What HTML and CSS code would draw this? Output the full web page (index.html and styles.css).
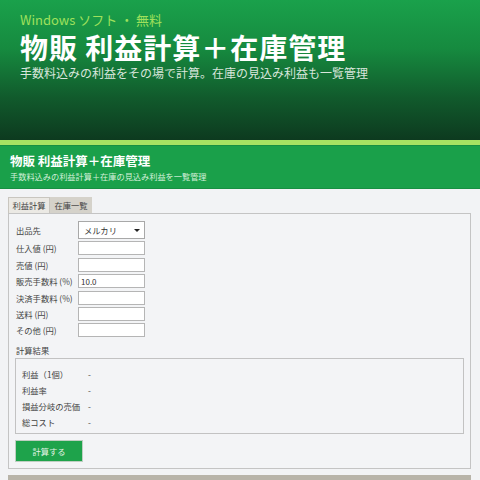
FILE: index.html
```html
<!DOCTYPE html>
<html lang="ja">
<head>
<meta charset="utf-8">
<title>物販 利益計算＋在庫管理</title>
<link rel="stylesheet" href="styles.css">
</head>
<body>
<section class="hero">
  <div class="eyebrow">Windows ソフト ・ 無料</div>
  <h1 class="hero-title">物販 利益計算＋在庫管理</h1>
  <p class="hero-sub">手数料込みの利益をその場で計算。在庫の見込み利益も一覧管理</p>
</section>
<div class="stripe"></div>
<header class="app-header">
  <div class="app-title">物販 利益計算＋在庫管理</div>
  <div class="app-sub">手数料込みの利益計算＋在庫の見込み利益を一覧管理</div>
</header>
<main class="main">
  <div class="tabs">
    <div class="tab active">利益計算</div>
    <div class="tab">在庫一覧</div>
  </div>
  <div class="panel">
    <div class="form">
      <div class="row"><span class="label">出品先</span><div class="select"><span>メルカリ</span><span class="arrow"></span></div></div>
      <div class="row"><span class="label">仕入値 (円)</span><input class="field" type="text"></div>
      <div class="row"><span class="label">売値 (円)</span><input class="field" type="text"></div>
      <div class="row"><span class="label">販売手数料 (%)</span><input class="field" type="text" value="10.0"></div>
      <div class="row"><span class="label">決済手数料 (%)</span><input class="field" type="text"></div>
      <div class="row"><span class="label">送料 (円)</span><input class="field" type="text"></div>
      <div class="row"><span class="label">その他 (円)</span><input class="field" type="text"></div>
    </div>
    <div class="group-label">計算結果</div>
    <div class="results">
      <div class="res-row"><span class="res-label">利益（1個）</span><span class="res-val">-</span></div>
      <div class="res-row"><span class="res-label">利益率</span><span class="res-val">-</span></div>
      <div class="res-row"><span class="res-label">損益分岐の売価</span><span class="res-val">-</span></div>
      <div class="res-row"><span class="res-label">総コスト</span><span class="res-val">-</span></div>
    </div>
    <button class="btn" type="button">計算する</button>
  </div>
  <div class="bottom-bar"></div>
</main>
</body>
</html>
```
FILE: styles.css
```css
* { box-sizing: border-box; }
html, body { margin: 0; padding: 0; }
body {
  width: 480px;
  height: 480px;
  overflow: hidden;
  background: #f2f3f5;
  font-family: "Noto Sans CJK JP", "Noto Sans", sans-serif;
  color: #444;
}
.hero {
  height: 140px;
  padding: 12px 20px 0;
  background: linear-gradient(to bottom, #1aa14b 0%, #168a3f 35%, #115a2c 70%, #0d3a1f 100%);
}
.eyebrow {
  font-size: 13px;
  line-height: 16px;
  color: #9fe05c;
}
.hero-title {
  margin: 3px 0 0;
  font-size: 28px;
  line-height: 32px;
  font-weight: 700;
  letter-spacing: 1px;
  color: #fff;
}
.hero-sub {
  margin: 3px 0 0;
  font-size: 12px;
  line-height: 14px;
  color: #d9e6dc;
}
.stripe {
  height: 5px;
  background: #a6e262;
}
.app-header {
  height: 44px;
  padding: 7px 10px 0;
  background: #1aa04a;
  border-top: 1px solid #178f42;
  border-bottom: 1px solid #178f42;
}
.app-title {
  font-size: 12.5px;
  line-height: 16px;
  font-weight: 700;
  color: #fff;
}
.app-sub {
  margin-top: 2px;
  font-size: 8.2px;
  line-height: 11px;
  color: #d4f0da;
}
.main {
  padding: 8px 9px 0 8px;
}
.tabs {
  display: flex;
  height: 16px;
}
.tab {
  width: 42px;
  height: 16px;
  font-size: 8.3px;
  line-height: 16px;
  text-align: center;
  color: #444;
  background: #d5d2ca;
}
.tab.active {
  background: #ebe9e4;
  border: 1px solid #c9c6bf;
  border-bottom: none;
  line-height: 15px;
}
.panel {
  border: 1px solid #c4c4c4;
  background: #f3f4f6;
  padding: 7px 6px 6px;
}
.form {
  display: flex;
  flex-direction: column;
  gap: 2.4px;
}
.row {
  display: flex;
  align-items: center;
  font-size: 8.3px;
}
.label {
  width: 63px;
  padding-left: 1px;
  color: #444;
}
.select {
  width: 67px;
  height: 18px;
  display: flex;
  align-items: center;
  justify-content: space-between;
  padding: 0 4px 0 5px;
  background: #fff;
  border: 1px solid #a8a8a8;
  font-size: 8.3px;
  color: #333;
}
.arrow {
  width: 0;
  height: 0;
  border-left: 3px solid transparent;
  border-right: 3px solid transparent;
  border-top: 3.5px solid #222;
}
.field {
  width: 67px;
  height: 14px;
  margin: 0;
  padding: 0 2px;
  border: 1px solid #b5b5b5;
  background: #fff;
  font-family: "Noto Sans CJK JP", "Noto Sans", sans-serif;
  font-size: 8px;
  color: #333;
  outline: none;
}
.group-label {
  margin-top: 8px;
  padding-left: 1px;
  font-size: 8.3px;
  line-height: 11px;
  color: #444;
}
.results {
  margin-top: 2px;
  height: 76px;
  border: 1px solid #c2c2c2;
  padding: 7px 6px 0;
  display: flex;
  flex-direction: column;
}
.res-row {
  display: flex;
  height: 16px;
  align-items: center;
  font-size: 8.3px;
  color: #444;
}
.res-label {
  width: 66px;
}
.btn {
  display: block;
  margin-top: 6px;
  width: 68px;
  height: 22px;
  padding: 0;
  background: #1ea34b;
  border: 1px solid #bfcfc2;
  color: #e4f3e6;
  font-family: "Noto Sans CJK JP", "Noto Sans", sans-serif;
  font-size: 8.3px;
}
.bottom-bar {
  margin-top: 6px;
  height: 10px;
  background: #b8b4a9;
}
```
